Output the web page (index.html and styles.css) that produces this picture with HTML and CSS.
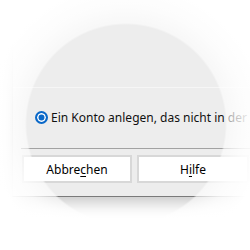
FILE: index.html
```html
<!DOCTYPE html>
<html lang="de">
<head>
    <meta charset="UTF-8">
    <meta name="viewport" content="width=device-width, initial-scale=1.0">
    <title>Konto anlegen</title>
    <link rel="stylesheet" href="styles.css">
</head>
<body>
    <div class="dialog">
        <div class="header"></div>

        <!-- Account option -->
        <label class="option">
            <span class="radio"></span>
            <span class="option-text">Ein Konto anlegen, das nicht in der</span>
        </label>

        <div class="separator"></div>

        <div class="buttons">
            <button class="btn">Abbre<u>c</u>hen</button>
            <button class="btn btn-wide">H<u>i</u>lfe</button>
        </div>
    </div>

    <!-- Magnifier lens over the dialog -->
    <div class="lens"></div>
</body>
</html>
```

FILE: styles.css
```css
* {
    margin: 0;
    padding: 0;
    box-sizing: border-box;
}

html, body {
    width: 250px;
    height: 250px;
    overflow: hidden;
}

body {
    background: #fff;
    font-family: 'Noto Sans', 'Open Sans', sans-serif;
    color: #000;
}

.dialog {
    margin-left: 12px;
    width: 238px;
    height: 197px;
    background: #ededed;
    border-left: 1px solid #d8d8d8;
    border-bottom: 1px solid #7a7a7a;
    box-shadow: 0 6px 14px rgba(0, 0, 0, 0.22);
    overflow: hidden;
}

.header {
    height: 88px;
    border-bottom: 1px solid #f6f6f6;
}

.option {
    display: flex;
    align-items: center;
    gap: 3px;
    height: 16px;
    margin-top: 21px;
    padding-left: 22px;
    font-size: 12px;
    white-space: nowrap;
    overflow: hidden;
}

.radio {
    flex: none;
    width: 13px;
    height: 13px;
    border-radius: 50%;
    background: #0a68c8;
    border: 2px solid #0a68c8;
    box-shadow: inset 0 0 0 1.5px #fff;
}

.option-text {
    color: #111;
}

.separator {
    height: 1px;
    margin: 23px 0 0 8px;
    background: #a2a2a2;
}

.buttons {
    display: flex;
    gap: 5px;
    margin-top: 6px;
    padding-left: 9px;
}

.btn {
    width: 110px;
    height: 28px;
    flex: none;
    background: #fff;
    border: 2px solid #d8d8d8;
    font-family: inherit;
    font-size: 12px;
    color: #000;
}

.btn-wide {
    width: 112px;
}

.btn u {
    text-underline-offset: 2px;
}

.lens {
    position: absolute;
    inset: 0;
    pointer-events: none;
    background: radial-gradient(circle at 126px 124px,
        rgba(255, 255, 255, 0) 99px,
        rgba(255, 255, 255, 0.6) 101px,
        rgba(255, 255, 255, 0.85) 118px,
        #fff 140px);
}
```
